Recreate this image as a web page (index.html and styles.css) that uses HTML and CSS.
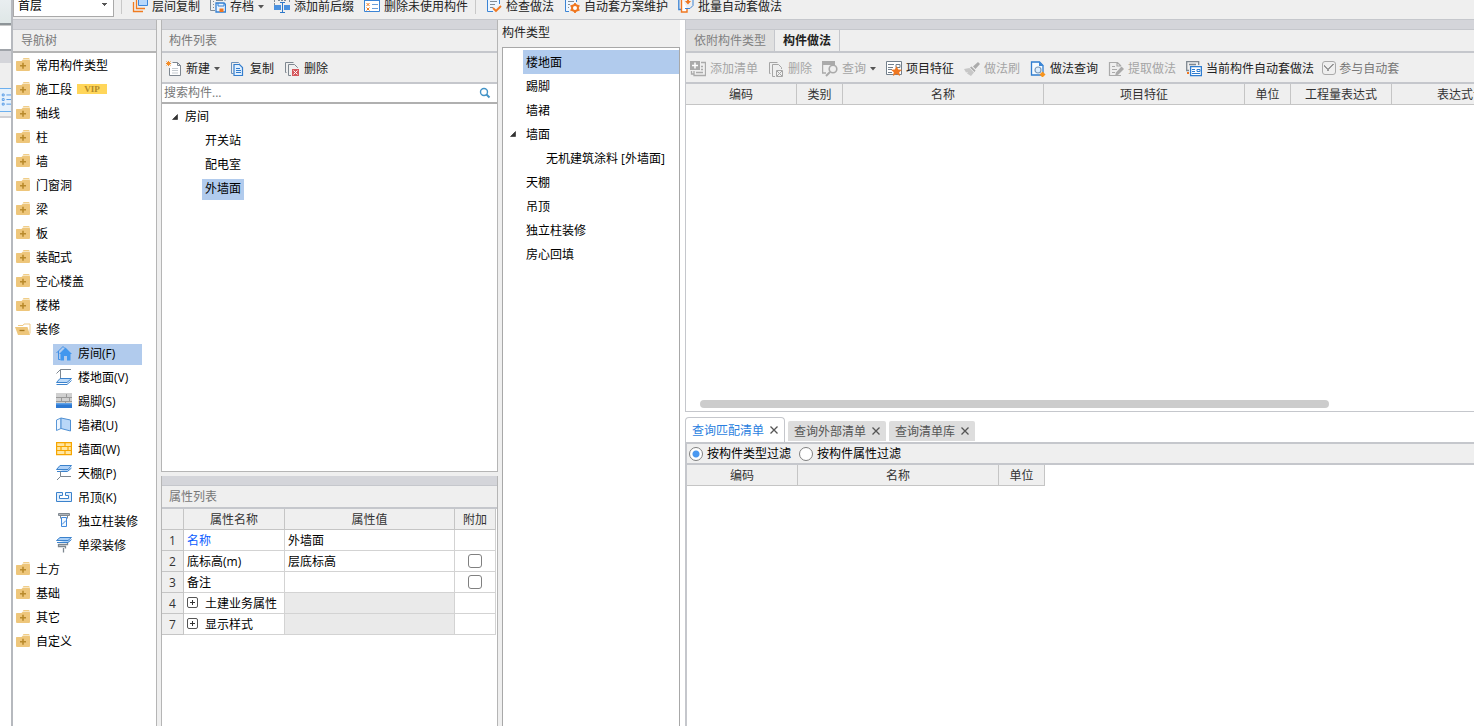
FILE: index.html
```
<!DOCTYPE html>
<html lang="zh-CN">
<head>
<meta charset="utf-8">
<title>构件做法</title>
<link rel="stylesheet" href="styles.css">
</head>
<body>
<svg class="defs" aria-hidden="true">
  <symbol id="folder" viewBox="0 0 16 16"><path fill="#f0cd88" d="M8.500 1H14l1 1.500H7.500z"/><path fill="#eec67b" d="M1.500 4h5l1-1H14.500q.500 0 .500.700V13q0 1-1 1H2q-1 0-1-1V5q0-1 .500-1z"/><path fill="none" stroke="#b98a2c" stroke-width="1.600" d="M5 8.700h6M8 5.700v6"/></symbol>
  <symbol id="folder-open" viewBox="0 0 16 16"><path fill="none" stroke="#efc985" d="M3 4.500h5l1-1.500h6v9.500"/><path fill="#eec67b" d="M0 6h12.500l2.500 8H3z"/><path stroke="#a87a20" stroke-width="1.300" d="M4.500 9.500h5"/></symbol>
  <symbol id="house" viewBox="0 0 16 16"><path fill="none" stroke="#3f8fe6" d="M.500 8L7 1.500l2 2M2.500 6v8.500h2"/><path fill="#4297ee" d="M9.500 2.500L3 9h1.500v6.500h3.500V11h3v4.500h3.500V9H16z"/></symbol>
  <symbol id="floor" viewBox="0 0 16 16"><path fill="none" stroke="#7e8790" d="M.500 4.500L4.500.500H15M4.500.500V9"/><path fill="#bcdaf9" stroke="#3b82cc" d="M4 9.500h11.500L11 13.500H.500z"/><path stroke="#3b82cc" d="M.500 15.500H11l4.500-4" fill="none"/></symbol>
  <symbol id="skirting" viewBox="0 0 16 16"><path fill="#d0d0d0" d="M0 0h16v10H0z"/><path fill="none" stroke="#999" d="M0 4.500h16M0 8.500h16M10.500 1v3.500M5.500 4.500v4M13.500 4.500v4M9.500 8.500V10"/><path fill="#5fa2e8" d="M0 10h16v2H0z"/><path fill="#2e79d2" d="M0 11.500h16V15H0z"/></symbol>
  <symbol id="dado" viewBox="0 0 16 16"><path fill="#eef6ff" stroke="#5997d7" d="M.500 3L5 1v10.500l-4.500 2z"/><path fill="#b9d7f8" stroke="#4e8fd3" d="M5 1l9.500 2v11L5 11.500z"/></symbol>
  <symbol id="bricks" viewBox="0 0 16 16"><path fill="#ffe6a2" stroke="#f6a500" stroke-width="1.200" d="M.600 1.600h14.800v12H.600z"/><path fill="none" stroke="#f6a500" stroke-width="1.200" d="M1 5.500h14M1 9.500h14M9 2v3.500M5 5.500v4M12 5.500v4M9 9.500v4"/></symbol>
  <symbol id="ceiling" viewBox="0 0 16 16"><path fill="#afd1f7" stroke="#3b82cc" d="M.500 4.500L4 .500h11.500L12 4.500zM1 6.500h10.500l4-3.500"/><path fill="none" stroke="#7e8790" d="M4.500 6.500v5H15M4.500 11.500L1 15"/></symbol>
  <symbol id="suspended" viewBox="0 0 16 16"><path fill="#e2effd" stroke="#3b82cc" d="M.500 3.500h6v3h-3v3h9v-3h-3v-3h6v9H.500z"/></symbol>
  <symbol id="column" viewBox="0 0 16 16"><path fill="#aeb4ba" stroke="#808890" d="M2.500.500h11v2h-11zM4.500 2.500v3M11.500 2.500v3"/><path fill="#f1f8ff" stroke="#3f88dc" d="M5.500 4.500h5v9h-5zM6 11.500l4-4"/></symbol>
  <symbol id="beam" viewBox="0 0 16 16"><path fill="#aad0f8" stroke="#3b82cc" d="M.500 3.500L4 .500h11.500L12 3.500zM1 5.500h11l3.500-3"/><path fill="none" stroke="#7e8790" d="M2.500 7.500h9V6M2.500 7v2.500h7v2M7.500 11v4.500" stroke-width="1.300"/></symbol>
  <symbol id="layers" viewBox="0 0 16 16"><path fill="none" stroke="#f07b20" stroke-width="1.300" d="M1.500 5v9.500H11M4.500 3v8.500H13"/><path fill="#b8d8fb" stroke="#3d87db" d="M6.500-.500h9v9h-9z"/></symbol>
  <symbol id="save-doc" viewBox="0 0 16 16"><path fill="none" stroke="#7f8b96" d="M5 13.500H.500V0M15 4V0M3 4.500h1M3 7.500h1M3 10.500h1M6 3.500h7"/><path fill="#e8f3ff" stroke="#3581d4" stroke-width="1.300" d="M6 6h8l1.500 1.500V15H6z"/><path fill="none" stroke="#3581d4" d="M8 6v3h6V6"/><path fill="#f07720" d="M9.500 11.500h4V15h-4z"/></symbol>
  <symbol id="affix" viewBox="0 0 16 16"><path fill="none" stroke="#7f8b96" stroke-dasharray="2 1" d="M.500 0v11M15.500 0v6M4 3.500h8"/><path fill="#4a91df" d="M0 8h7v5H0zM10 8h6v5h-6z"/><path fill="none" stroke="#2d78c9" d="M6 5.500h5M8.500 5.500v10M6 15.500h5"/></symbol>
  <symbol id="list" viewBox="0 0 16 16"><path fill="#fff" stroke="#3b84d5" d="M.500 2.500h15v12H.500z"/><path stroke="#3b84d5" stroke-width="2" d="M0 3h16"/><path stroke="#f07b20" d="M2.500 6l3 3M5.500 6l-3 3M2.500 10.500l3 3M5.500 10.500l-3 3"/><path stroke="#6a9fda" d="M8 7.500h6M8 11.500h6"/></symbol>
  <symbol id="check-doc" viewBox="0 0 16 16"><path fill="#edf6ff" stroke="#3b84d5" d="M7 14.500H1.500V1.500h12V7"/><path stroke="#7f8b96" d="M4 4.500h7M4 7.500h5M4 10.500h3"/><path fill="none" stroke="#f07720" stroke-width="1.800" d="M7 11l3 3 5-5"/></symbol>
  <symbol id="gear-doc" viewBox="0 0 16 16"><path fill="#edf6ff" stroke="#3b84d5" d="M5 14.500H1.500V1.500h11V5"/><path stroke="#7f8b96" d="M4 4.500h6M4 7.500h2M4 10.500h1"/><circle cx="11" cy="11" r="3" fill="#fff" stroke="#f07720" stroke-width="2"/><path stroke="#f07720" stroke-width="1.800" d="M11 6v2M11 14v2M6.500 8.500l2 1M13.500 12.500l2 1M6.500 13.500l2-1M13.500 9.500l2-1"/></symbol>
  <symbol id="batch" viewBox="0 0 16 16"><path fill="none" stroke="#3b84d5" stroke-width="1.300" d="M3 12.500H.800V1"/><path fill="#fff" stroke="#f07720" stroke-width="1.400" d="M3.500 0v15H9v-3.500"/><path fill="none" stroke="#3b84d5" d="M7 11.500h5l3-3V0"/><path fill="#f07720" d="M7 4h6l-3 3.500zM9 1h2v3H9z"/></symbol>
  <symbol id="new" viewBox="0 0 16 16"><path fill="#fff" stroke="#7e8790" d="M6.500 1.500h5L14.500 4.500v10h-11V7M11.500 1.500v3h3"/><path stroke="#c5cbd0" d="M6 7.500h6M6 9.500h6M6 12h6"/><path stroke="#f38c28" d="M.500.500l4 4M4.500.500l-4 4M2.500 0v5M0 2.500h5"/></symbol>
  <symbol id="copy" viewBox="0 0 16 16"><path fill="none" stroke="#6c91bb" d="M3.500 12.500h-2v-11h7l1 1"/><path fill="#e1f0ff" stroke="#337dcd" stroke-width="1.200" d="M4 3.500h5.500l3 3v8H4z"/><path stroke="#337dcd" d="M6 7.500h4M6 9.500h5M6 11.500h5"/></symbol>
  <symbol id="delete" viewBox="0 0 16 16"><path fill="none" stroke="#7e8790" d="M2.500 11.500h-1v-10h8M4.500 14.500v-11h6l3 3V7M4.500 14.500H7"/><path fill="#d4575c" d="M8 8h7v7H8z"/><path stroke="#fff" d="M9.500 9.500l4 4M13.500 9.500l-4 4"/></symbol>
  <symbol id="delete-off" viewBox="0 0 16 16"><path fill="none" stroke="#a5a5a5" d="M2.500 12.500h-1v-11h8M4.500 15.500v-12h6l3 3V8M4.500 15.500H7"/><path fill="none" stroke="#a5a5a5" d="M8.500 9.500h6v6h-6zM9 10l5 5M14 10l-5 5"/></symbol>
  <symbol id="add-list" viewBox="0 0 16 16"><path fill="#aaa" d="M0 0h10v9H0z"/><path stroke="#fff" stroke-width="1.500" d="M2 4.500h6M5 1.500v6"/><path fill="none" stroke="#aaa" stroke-width="1.300" d="M11 1.500h4.500v13H4V10M6 11.500h7M11 5.500h2M11 8.500h2M1.500 10v3H4"/></symbol>
  <symbol id="query" viewBox="0 0 16 16"><path fill="#aaa" d="M0 0h13v4H0z"/><path fill="none" stroke="#aaa" stroke-width="1.300" d="M.600 4v8H4"/><circle cx="11" cy="8" r="3.800" fill="#efefef" stroke="#aaa" stroke-width="1.600"/><path stroke="#aaa" stroke-width="2" d="M8 11l-4 4"/></symbol>
  <symbol id="feature" viewBox="0 0 16 16"><path fill="#fff" stroke="#73808c" d="M.500.500h15v13H.500z"/><path stroke="#73808c" d="M2 3.500h6M2 6.500h5M2 8.500h4M2 11.500h4M10 3.500h4v3h-4z" fill="none"/><path fill="#f07720" d="M10.500 5l1.700 3.400 3.800.300-2.800 2.500.900 3.800-3.600-2-3.600 2 .900-3.800L5 8.700l3.800-.300z"/></symbol>
  <symbol id="brush" viewBox="0 0 16 16"><path fill="#ababab" d="M14 1l2 2-4.500 5L9 5.500zM7.500 5.500L11.500 9.500l-1 1.500L6 6.500z"/><path fill="#c7c7c7" d="M5.500 7l4.500 4.500L7 15l-4-2.500 1-1.500-2 .500L0 8z"/></symbol>
  <symbol id="method" viewBox="0 0 16 16"><path fill="#f4faff" stroke="#2f7dd0" stroke-width="1.300" d="M1.500 1h8L13 4.500V14H1.500z"/><path fill="#3c86d6" d="M9 1l4.500 4H9z"/><circle cx="8" cy="9" r="3" fill="#dceeff" stroke="#7c99b7" stroke-width="1.200"/><path fill="#f7941d" d="M12.500 10.500l3 3-3 3-3-3z"/></symbol>
  <symbol id="extract" viewBox="0 0 16 16"><path fill="none" stroke="#aaa" stroke-width="1.200" d="M13 14.500H1.500v-13h8L13 5M9 1.500V5h4M4 5.500h3M4 8.500h5M4 11.500h3"/><path fill="#aaa" d="M13.500 5.500L16 8l-5.500 5.500L7 15l1-3.500z"/></symbol>
  <symbol id="auto" viewBox="0 0 16 16"><path fill="none" stroke="#7e8790" stroke-width="1.300" d="M3 9.500H.700V.700h12V4M3 3.500h7"/><path fill="#fff" stroke="#2f7dd0" stroke-width="1.300" d="M4.600 5.600h10.800v9H4.600z"/><path stroke="#2f7dd0" d="M6 8.500h3M6 10.500h3M11 8.500h3v2h-3zM6 12.500h8" fill="none"/><path fill="#f07720" d="M1 11h2v2H1z"/></symbol>
  <symbol id="search" viewBox="0 0 16 16"><circle cx="7" cy="7" r="3.500" fill="none" stroke="#4393c7" stroke-width="1.400"/><path stroke="#4393c7" stroke-width="2" d="M9.500 9.500l3 3"/></symbol>
  <symbol id="caret" viewBox="0 0 6 4"><path fill="#555" d="M0 0h6L3 3.500z"/></symbol>
  <symbol id="expanded" viewBox="0 0 6 6"><path fill="#333" stroke="#111" stroke-width=".500" d="M5.500.500v5h-5z"/></symbol>
  <symbol id="plus-box" viewBox="0 0 11 11"><rect x=".500" y=".500" width="10" height="10" rx="1.500" fill="#fff" stroke="#555"/><path stroke="#333" d="M3 5.500h5M5.500 3v5"/></symbol>
  <symbol id="close" viewBox="0 0 8 8"><path stroke="#555" stroke-width="1.300" d="M.500.500l7 7M7.500.500l-7 7"/></symbol>
  <symbol id="nodes" viewBox="0 0 12 14"><path fill="#fff" stroke="#4a95e5" d="M2.500.500h2v2h-2zM2.500 5.500h2v2h-2zM2.500 10.500h2v2h-2zM7 1.500h5M7 6.500h5M7 11.500h5"/></symbol>
</svg>

<div class="app">
  <aside class="edge">
    <div class="edge-top"></div>
    <div class="edge-field"></div>
    <div class="edge-band"></div>
    <div class="edge-head"></div>
    <button class="edge-button" aria-label="列表"><svg class="nodes"><use href="#nodes"/></svg></button>
    <div class="edge-foot"></div>
  </aside>

  <main class="main">
    <header class="toolbar">
      <select class="floor-select" aria-label="楼层"><option>首层</option></select>
      <span class="sep"></span>
      <button class="tool"><svg class="icon"><use href="#layers"/></svg>层间复制</button>
      <button class="tool"><svg class="icon"><use href="#save-doc"/></svg>存档<svg class="caret"><use href="#caret"/></svg></button>
      <button class="tool"><svg class="icon"><use href="#affix"/></svg>添加前后缀</button>
      <button class="tool"><svg class="icon"><use href="#list"/></svg>删除未使用构件</button>
      <span class="sep"></span>
      <button class="tool"><svg class="icon"><use href="#check-doc"/></svg>检查做法</button>
      <button class="tool"><svg class="icon"><use href="#gear-doc"/></svg>自动套方案维护</button>
      <button class="tool"><svg class="icon"><use href="#batch"/></svg>批量自动套做法</button>
    </header>

    <div class="columns">
      <nav class="nav">
        <div class="band"></div>
        <h2 class="title">导航树</h2>
        <ul class="nav-list">
          <li class="nav-row"><svg class="icon"><use href="#folder"/></svg>常用构件类型</li>
          <li class="nav-row"><svg class="icon"><use href="#folder"/></svg>施工段<span class="vip">VIP</span></li>
          <li class="nav-row"><svg class="icon"><use href="#folder"/></svg>轴线</li>
          <li class="nav-row"><svg class="icon"><use href="#folder"/></svg>柱</li>
          <li class="nav-row"><svg class="icon"><use href="#folder"/></svg>墙</li>
          <li class="nav-row"><svg class="icon"><use href="#folder"/></svg>门窗洞</li>
          <li class="nav-row"><svg class="icon"><use href="#folder"/></svg>梁</li>
          <li class="nav-row"><svg class="icon"><use href="#folder"/></svg>板</li>
          <li class="nav-row"><svg class="icon"><use href="#folder"/></svg>装配式</li>
          <li class="nav-row"><svg class="icon"><use href="#folder"/></svg>空心楼盖</li>
          <li class="nav-row"><svg class="icon"><use href="#folder"/></svg>楼梯</li>
          <li class="nav-row"><svg class="icon"><use href="#folder-open"/></svg>装修</li>
          <li class="nav-row child"><span class="leaf selected"><svg class="icon"><use href="#house"/></svg>房间(F)</span></li>
          <li class="nav-row child"><span class="leaf"><svg class="icon"><use href="#floor"/></svg>楼地面(V)</span></li>
          <li class="nav-row child"><span class="leaf"><svg class="icon"><use href="#skirting"/></svg>踢脚(S)</span></li>
          <li class="nav-row child"><span class="leaf"><svg class="icon"><use href="#dado"/></svg>墙裙(U)</span></li>
          <li class="nav-row child"><span class="leaf"><svg class="icon"><use href="#bricks"/></svg>墙面(W)</span></li>
          <li class="nav-row child"><span class="leaf"><svg class="icon"><use href="#ceiling"/></svg>天棚(P)</span></li>
          <li class="nav-row child"><span class="leaf"><svg class="icon"><use href="#suspended"/></svg>吊顶(K)</span></li>
          <li class="nav-row child"><span class="leaf"><svg class="icon"><use href="#column"/></svg>独立柱装修</span></li>
          <li class="nav-row child"><span class="leaf"><svg class="icon"><use href="#beam"/></svg>单梁装修</span></li>
          <li class="nav-row"><svg class="icon"><use href="#folder"/></svg>土方</li>
          <li class="nav-row"><svg class="icon"><use href="#folder"/></svg>基础</li>
          <li class="nav-row"><svg class="icon"><use href="#folder"/></svg>其它</li>
          <li class="nav-row"><svg class="icon"><use href="#folder"/></svg>自定义</li>
        </ul>
      </nav>

      <div class="components">
        <section class="panel component-panel">
          <div class="band"></div>
          <h2 class="title">构件列表</h2>
          <div class="actions">
            <button class="tool"><svg class="icon"><use href="#new"/></svg>新建<svg class="caret"><use href="#caret"/></svg></button>
            <button class="tool"><svg class="icon"><use href="#copy"/></svg>复制</button>
            <button class="tool"><svg class="icon"><use href="#delete"/></svg>删除</button>
          </div>
          <label class="search"><input type="text" placeholder="搜索构件..." aria-label="搜索构件"><svg class="icon"><use href="#search"/></svg></label>
          <ul class="tree">
            <li class="tree-row"><svg class="arrow"><use href="#expanded"/></svg>房间</li>
            <li class="tree-row tree-child"><span>开关站</span></li>
            <li class="tree-row tree-child"><span>配电室</span></li>
            <li class="tree-row tree-child"><span class="selected">外墙面</span></li>
          </ul>
        </section>
        <section class="panel property-panel">
          <div class="band"></div>
          <h2 class="title">属性列表</h2>
          <table class="props">
            <colgroup><col class="w-no"><col class="w-prop"><col class="w-value"><col class="w-add"></colgroup>
            <thead><tr><th></th><th>属性名称</th><th>属性值</th><th>附加</th></tr></thead>
            <tbody>
              <tr><th>1</th><td class="link">名称</td><td>外墙面</td><td></td></tr>
              <tr><th>2</th><td>底标高(m)</td><td>层底标高</td><td class="tick"><input type="checkbox" aria-label="底标高附加"></td></tr>
              <tr><th>3</th><td>备注</td><td></td><td class="tick"><input type="checkbox" aria-label="备注附加"></td></tr>
              <tr><th>4</th><td><svg class="plus"><use href="#plus-box"/></svg>土建业务属性</td><td class="locked"></td><td></td></tr>
              <tr><th>7</th><td><svg class="plus"><use href="#plus-box"/></svg>显示样式</td><td class="locked"></td><td></td></tr>
            </tbody>
          </table>
        </section>
      </div>

      <section class="types">
        <h2 class="types-title">构件类型</h2>
        <ul class="type-list">
          <li class="type-row"><span class="type-label selected">楼地面</span></li>
          <li class="type-row"><span class="type-label">踢脚</span></li>
          <li class="type-row"><span class="type-label">墙裙</span></li>
          <li class="type-row"><svg class="arrow"><use href="#expanded"/></svg><span class="type-label">墙面</span></li>
          <li class="type-row type-child"><span class="type-label">无机建筑涂料 [外墙面]</span></li>
          <li class="type-row"><span class="type-label">天棚</span></li>
          <li class="type-row"><span class="type-label">吊顶</span></li>
          <li class="type-row"><span class="type-label">独立柱装修</span></li>
          <li class="type-row"><span class="type-label">房心回填</span></li>
        </ul>
      </section>

      <div class="work">
        <section class="methods">
          <div class="band"></div>
          <div class="tabs">
            <button class="tab">依附构件类型</button>
            <button class="tab active">构件做法</button>
          </div>
          <div class="actions">
            <button class="tool" disabled><svg class="icon"><use href="#add-list"/></svg>添加清单</button>
            <button class="tool" disabled><svg class="icon"><use href="#delete-off"/></svg>删除</button>
            <button class="tool" disabled><svg class="icon"><use href="#query"/></svg>查询<svg class="caret"><use href="#caret"/></svg></button>
            <button class="tool"><svg class="icon"><use href="#feature"/></svg>项目特征</button>
            <button class="tool" disabled><svg class="icon"><use href="#brush"/></svg>做法刷</button>
            <button class="tool"><svg class="icon"><use href="#method"/></svg>做法查询</button>
            <button class="tool" disabled><svg class="icon"><use href="#extract"/></svg>提取做法</button>
            <button class="tool"><svg class="icon"><use href="#auto"/></svg>当前构件自动套做法</button>
            <label class="join"><input type="checkbox" checked disabled>参与自动套</label>
          </div>
          <div class="grid-wrap">
            <table class="grid method-grid">
              <colgroup><col class="w-code"><col class="w-unit"><col class="w-name"><col class="w-name"><col class="w-unit"><col class="w-expr"><col class="w-note"></colgroup>
              <thead><tr><th>编码</th><th>类别</th><th>名称</th><th>项目特征</th><th>单位</th><th>工程量表达式</th><th>表达式说明</th></tr></thead>
            </table>
          </div>
          <div class="scroll"><div class="thumb"></div></div>
        </section>
        <section class="queries">
          <div class="query-tabs">
            <button class="query-tab active">查询匹配清单<svg class="close"><use href="#close"/></svg></button>
            <button class="query-tab">查询外部清单<svg class="close"><use href="#close"/></svg></button>
            <button class="query-tab">查询清单库<svg class="close"><use href="#close"/></svg></button>
          </div>
          <div class="query-body">
            <div class="filters">
              <label><input type="radio" name="filter" checked>按构件类型过滤</label>
              <label><input type="radio" name="filter">按构件属性过滤</label>
            </div>
            <table class="grid query-grid">
              <colgroup><col class="w-code"><col class="w-name"><col class="w-unit"></colgroup>
              <thead><tr><th>编码</th><th>名称</th><th>单位</th></tr></thead>
            </table>
          </div>
        </section>
      </div>
    </div>
  </main>
</div>
</body>
</html>
```
FILE: styles.css
```
* { box-sizing: border-box; }
body {
  margin: 0;
  color: #000;
  background: #fff;
  font: 12px/20px "Open Sans", "Noto Sans CJK SC", sans-serif;
  white-space: nowrap;
}
h2, ul { margin: 0; padding: 0; font-size: 12px; font-weight: 400; list-style: none; }
button, input, select { font: inherit; color: inherit; }
button { margin: 0; padding: 0; border: 0; background: none; }
svg { flex: none; display: block; }
.defs { position: absolute; width: 0; height: 0; }
.icon { width: 16px; height: 16px; }
.caret { width: 6px; height: 4px; }
.arrow { width: 6px; height: 6px; }
.selected { background: #b1cbed; }

.app { display: flex; height: 100vh; overflow: hidden; }

.edge { display: flex; flex-direction: column; flex: none; width: 11px; }
.edge-top { height: 25px; background: linear-gradient(#e9eef0, #dfe7e7); border-bottom: 2px solid #8d9498; }
.edge-field { height: 26px; border-top: 1px solid #c8c8c8; border-bottom: 2px solid #a0a4aa; }
.edge-band { height: 12px; background: #d4d5da; }
.edge-head { height: 25px; background: #efefef; }
.edge-button { height: 24px; background: #e5f1fc; border: solid #6db0ee; border-width: 1px 0; }
.nodes { width: 11px; height: 14px; }
.edge-foot { height: 6px; background: #efefef; border-bottom: 2px solid #d0d0d4; }

.main { display: flex; flex-direction: column; flex: 1; min-width: 0; border-left: 2px solid #b6b9be; background: #efefef; }
.toolbar { display: flex; align-items: flex-end; flex: none; height: 20px; overflow: hidden; border-bottom: 1px solid #c5c7cc; background: #efefef; }
.toolbar .tool { height: 25px; }
.toolbar .tool + .tool { margin-left: 10px; }
.toolbar .icon { margin-bottom: 4px; }
.sep { width: 1px; height: 14px; margin: 0 10px 5px 7px; background: #c8c8c8; }
.floor-select {
  width: 101px; height: 24px; margin: 0 0 2px 0; padding: 2px 4px 0;
  border: 1px solid #a9a9a9; border-radius: 0; appearance: none;
  background: linear-gradient(#555, #555) no-repeat right 6px bottom 12px / 5px 1px,
    linear-gradient(#555, #555) no-repeat right 7px bottom 11px / 3px 1px,
    linear-gradient(#555, #555) no-repeat right 8px bottom 10px / 1px 1px, #fff;
}
.tool { display: flex; align-items: center; gap: 4px; color: #222; }
.tool:disabled { color: #a5a5a5; }

.columns { display: flex; flex: 1; min-height: 0; }
.band { flex: none; height: 10px; background: #d4d5da; border-bottom: 1px solid #c5c7cc; }
.title { flex: none; height: 23px; padding-left: 8px; line-height: 21px; color: #777; border-bottom: 2px solid #c5c7cc; }
.panel .title { padding-left: 7px; }

.nav { flex: none; width: 144px; margin-right: 4px; border-right: 1px solid #b5b5b5; background: #fff; }
.nav .title { background: #efefef; border-bottom-color: #b5b5b5; }
.nav-row { display: flex; align-items: center; gap: 5px; height: 24px; padding: 2px 0 0 2px; }
.nav .icon { margin-bottom: 2px; }
.child { padding-left: 40px; }
.leaf { display: flex; align-items: center; gap: 6px; height: 21px; padding-left: 3px; }
.leaf.selected { width: 89px; }
.vip { width: 30px; height: 10px; margin-bottom: 2px; background: #ffd65a; color: #b18a2a; font: bold 9px/10px "Liberation Serif", serif; text-align: center; }

.components { display: flex; flex-direction: column; flex: none; gap: 4px; width: 337px; }
.panel { display: flex; flex-direction: column; border: solid #b5b5b5; border-width: 0 1px; }
.component-panel { flex: 1; border-bottom-width: 1px; }
.property-panel { flex: none; height: 250px; background: #fff; }
.property-panel .title { background: #efefef; }
.actions { display: flex; align-items: center; flex: none; gap: 10px; height: 31px; padding: 2px 0 0 4px; border-bottom: 2px solid #c5c7cc; background: #efefef; }
.search { display: flex; align-items: center; flex: none; height: 20px; padding: 0 4px 0 2px; border-bottom: 2px solid #b0b0b0; background: #fff; }
.search input { flex: 1; min-width: 0; height: 18px; padding: 0; border: 0; outline: 0; }
.search input::placeholder { color: #777; }
.tree { flex: 1; background: #fff; }
.tree-row { display: flex; align-items: center; gap: 7px; height: 24px; padding: 2px 0 0 10px; }
.tree-child { padding-left: 40px; }
.tree-child span { height: 21px; padding: 0 3px; }

table { border-collapse: separate; border-spacing: 0; table-layout: fixed; }
th, td { height: 21px; padding: 2px 3px 0; overflow: hidden; line-height: 18px; font-weight: 400; border: solid #d3d3d3; border-width: 0 1px 1px 0; }
th { padding: 2px 0 0; color: #333; text-align: center; background: #efefef; border-color: #c5c5c5; }
td { text-align: left; }
.props { width: 334px; }
.w-no { width: 22px; }
.w-prop { width: 101px; }
.w-value { width: 170px; }
.w-add { width: 41px; }
.w-code { width: 111px; }
.w-unit { width: 46px; }
.w-name { width: 201px; }
.w-expr { width: 101px; }
.w-note { width: 151px; }
.link { color: #0a5cff; }
.locked { background: #eaeaea; }
.tick { padding: 0; }
.plus { display: inline-block; width: 11px; height: 11px; margin-right: 7px; vertical-align: 0; }
input[type="checkbox"], input[type="radio"] { flex: none; width: 14px; height: 14px; margin: 0; appearance: none; border: 1px solid #808080; border-radius: 3px; background: #fff; }
.tick input { display: block; margin: 0 auto; }

.types { display: flex; flex-direction: column; flex: none; width: 182px; padding: 0 0 0 4px; }
.types-title { height: 27px; line-height: 25px; color: #222; }
.type-list { flex: 1; padding-top: 2px; border: solid #a8a8a8; border-width: 1px 1px 0; background: #fff; }
.type-row { display: flex; align-items: center; height: 24px; padding-left: 20px; }
.type-row .arrow { margin: 0 7px 0 -13px; }
.type-child { padding-left: 40px; }
.type-label { flex: 1; padding: 2px 0 0 3px; line-height: 22px; }

.work { display: flex; flex-direction: column; flex: 1; gap: 5px; min-width: 0; padding-left: 5px; background: #fff; }
.methods { display: flex; flex-direction: column; flex: 1; min-height: 0; border: solid #c5c7cc; border-width: 0 0 1px 1px; }
.tabs { display: flex; flex: none; height: 23px; border-bottom: 2px solid #c5c7cc; background: #efefef; }
.tab { padding: 0 8px; line-height: 21px; color: #808080; background: #e0e0e0; border-right: 1px solid #c5c7cc; }
.tab.active { font-weight: 700; color: #222; background: #efefef; }
.join { display: flex; align-items: center; gap: 3px; margin-left: -2px; color: #777; }
.join input { margin-bottom: 2px; border-color: #aaa; }
.join input:checked { background: linear-gradient(45deg, transparent 46%, #999 46% 58%, transparent 58%) no-repeat 1px 2px / 5px 8px, linear-gradient(-45deg, transparent 46%, #999 46% 58%, transparent 58%) no-repeat 4px 2px / 7px 7px; }
.grid-wrap { flex: 1; overflow: hidden; }
.method-grid { width: 857px; }
.scroll { flex: none; height: 11px; padding: 0 145px 0 14px; }
.thumb { height: 8px; border-radius: 4px; background: #ccc; }

.queries { display: flex; flex-direction: column; flex: none; height: 309px; }
.query-tabs { display: flex; align-items: flex-end; gap: 3px; flex: none; height: 25px; }
.query-tab { display: flex; align-items: center; gap: 6px; height: 20px; margin-bottom: 1px; padding: 2px 6px 0; color: #555; background: #ddd; border-radius: 2px 2px 0 0; }
.query-tab.active { height: 25px; margin: 0; color: #2b7fe0; background: #fff; border: 1px solid #c5c7cc; border-bottom: 0; border-radius: 4px 4px 0 0; }
.close { width: 8px; height: 8px; margin-bottom: 2px; }
.query-body { flex: 1; border-left: 2px solid #c5c7cc; border-top: 2px solid #c5c7cc; }
.filters { display: flex; align-items: center; gap: 8px; height: 21px; padding-left: 2px; border-bottom: 2px solid #c5c7cc; background: #efefef; }
.filters label { display: flex; align-items: center; gap: 4px; }
input[type="radio"] { border-radius: 50%; }
input[type="radio"]:checked { background: radial-gradient(circle, #4a98f0 3px, #fff 4px); }
.query-grid { width: 358px; }
```
